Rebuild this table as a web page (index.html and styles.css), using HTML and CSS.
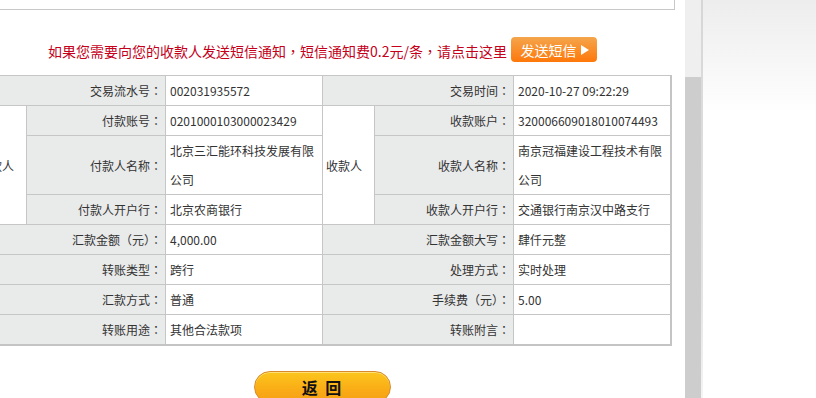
FILE: index.html
```html
<!DOCTYPE html>
<html lang="zh-CN">
<head>
<meta charset="utf-8">
<title>转账详情</title>
<link rel="stylesheet" href="styles.css">
</head>
<body>
<div class="main">
  <div class="wrap">
    <div class="topbox"></div>
    <div class="notice">
      <span class="notice-text">如果您需要向您的收款人发送短信通知<span class="p" lang="zh-TW">，</span>短信通知费0.2元/条<span class="p" lang="zh-TW">，</span>请点击这里</span>
      <a class="sms-btn" href="#">发送短信<span class="tri"></span></a>
    </div>
    <table class="detail">
      <colgroup>
        <col class="c-party"><col class="c-label"><col class="c-val">
        <col class="c-party"><col class="c-label"><col class="c-val">
      </colgroup>
      <tr>
        <td class="label" colspan="2">交易流水号<span class="p" lang="zh-TW">：</span></td><td class="val">002031935572</td>
        <td class="label" colspan="2">交易时间<span class="p" lang="zh-TW">：</span></td><td class="val">2020-10-27 09:22:29</td>
      </tr>
      <tr>
        <td class="party" rowspan="3">付款人</td>
        <td class="label">付款账号<span class="p" lang="zh-TW">：</span></td><td class="val">0201000103000023429</td>
        <td class="party" rowspan="3">收款人</td>
        <td class="label">收款账户<span class="p" lang="zh-TW">：</span></td><td class="val">320006609018010074493</td>
      </tr>
      <tr>
        <td class="label">付款人名称<span class="p" lang="zh-TW">：</span></td><td class="val wrapv">北京三汇能环科技发展有限公司</td>
        <td class="label">收款人名称<span class="p" lang="zh-TW">：</span></td><td class="val wrapv">南京冠福建设工程技术有限公司</td>
      </tr>
      <tr>
        <td class="label">付款人开户行<span class="p" lang="zh-TW">：</span></td><td class="val">北京农商银行</td>
        <td class="label">收款人开户行<span class="p" lang="zh-TW">：</span></td><td class="val">交通银行南京汉中路支行</td>
      </tr>
      <tr>
        <td class="label" colspan="2">汇款金额（元）<span class="p" lang="zh-TW">：</span></td><td class="val">4,000.00</td>
        <td class="label" colspan="2">汇款金额大写<span class="p" lang="zh-TW">：</span></td><td class="val">肆仟元整</td>
      </tr>
      <tr>
        <td class="label" colspan="2">转账类型<span class="p" lang="zh-TW">：</span></td><td class="val">跨行</td>
        <td class="label" colspan="2">处理方式<span class="p" lang="zh-TW">：</span></td><td class="val">实时处理</td>
      </tr>
      <tr>
        <td class="label" colspan="2">汇款方式<span class="p" lang="zh-TW">：</span></td><td class="val">普通</td>
        <td class="label" colspan="2">手续费（元）<span class="p" lang="zh-TW">：</span></td><td class="val">5.00</td>
      </tr>
      <tr>
        <td class="label" colspan="2">转账用途<span class="p" lang="zh-TW">：</span></td><td class="val">其他合法款项</td>
        <td class="label" colspan="2">转账附言<span class="p" lang="zh-TW">：</span></td><td class="val"></td>
      </tr>
    </table>
    <div class="actions">
      <a class="back-btn" href="#">返 回</a>
    </div>
  </div>
</div>
<div class="scrollbar"></div>
<div class="divider"></div>
<div class="side"></div>
</body>
</html>
```
FILE: styles.css
```css
html, body {
  margin: 0;
  padding: 0;
  height: 398px;
  overflow: hidden;
  background: #fff;
}
body {
  display: flex;
  font-family: "Noto Sans CJK SC", "Liberation Sans", sans-serif;
  font-size: 12px;
  color: #333;
}
.p {
  font-family: "Noto Sans CJK TC", "Noto Sans CJK SC", sans-serif;
}
.main {
  width: 685px;
  flex: none;
  overflow: hidden;
}
.wrap {
  width: 705px;
  margin-left: -30px;
}
.topbox {
  height: 9px;
  border-right: 1px solid #c8c8c8;
  border-bottom: 1px solid #c8c8c8;
}
.notice {
  box-sizing: border-box;
  height: 65px;
  padding-top: 14px;
  display: flex;
  align-items: center;
  justify-content: center;
  gap: 4px;
}
.notice-text {
  font-size: 14px;
  color: #c4001a;
  line-height: 20px;
  padding-top: 2px;
}
.sms-btn {
  box-sizing: border-box;
  width: 86px;
  height: 25px;
  display: flex;
  align-items: center;
  justify-content: center;
  gap: 5px;
  border-radius: 4px;
  background: linear-gradient(#f4a54c, #fe780a);
  color: #fff;
  font-size: 14px;
  text-decoration: none;
  padding-left: 2px;
}
.tri {
  width: 0;
  height: 0;
  border-top: 5px solid transparent;
  border-bottom: 5px solid transparent;
  border-left: 8px solid #fff;
}
.detail {
  margin-left: 4px;
  width: 697px;
  table-layout: fixed;
  border-collapse: collapse;
  border-right: 2px solid #c4c4c4;
  border-bottom: 2px solid #c4c4c4;
}
.c-party { width: 52px; }
.c-label { width: 139px; }
.c-val { width: 157px; }
.detail td {
  border: 1px solid #c6c6c6;
  line-height: 29px;
  height: 29px;
  padding: 0 4px;
  white-space: nowrap;
  overflow: hidden;
}
.detail td.label {
  background: #e9eaea;
  text-align: right;
  padding-right: 3px;
}
.detail td.val {
  background: #fff;
  padding-left: 4px;
}
.detail td.wrapv {
  white-space: normal;
  word-break: break-all;
}
.detail td.party {
  background: #fff;
  text-align: left;
  padding-left: 3px;
}
.actions {
  display: flex;
  justify-content: center;
  padding-top: 25px;
}
.back-btn {
  box-sizing: border-box;
  width: 137px;
  height: 32px;
  border-radius: 16px;
  border: 1px solid #d9892a;
  background: linear-gradient(#fcc61c, #f9ab16 60%, #f6a014);
  box-shadow: inset 0 1px 0 #fde27a;
  color: #111;
  font-size: 16px;
  font-weight: bold;
  text-align: center;
  line-height: 30px;
  text-decoration: none;
  letter-spacing: 2px;
}
.scrollbar {
  width: 16px;
  flex: none;
  background: linear-gradient(#efefef 0, #efefef 77px, #cdcdcd 77px, #cdcdcd 100%);
}
.divider {
  width: 2px;
  flex: none;
  background: linear-gradient(#d6d6d6, #e4e4e4 300px, #f4f4f4);
}
.side {
  flex: 1;
  background: linear-gradient(#ededed 0, #f6f6f6 60px, #fff 115px, #fff 100%);
}
```
